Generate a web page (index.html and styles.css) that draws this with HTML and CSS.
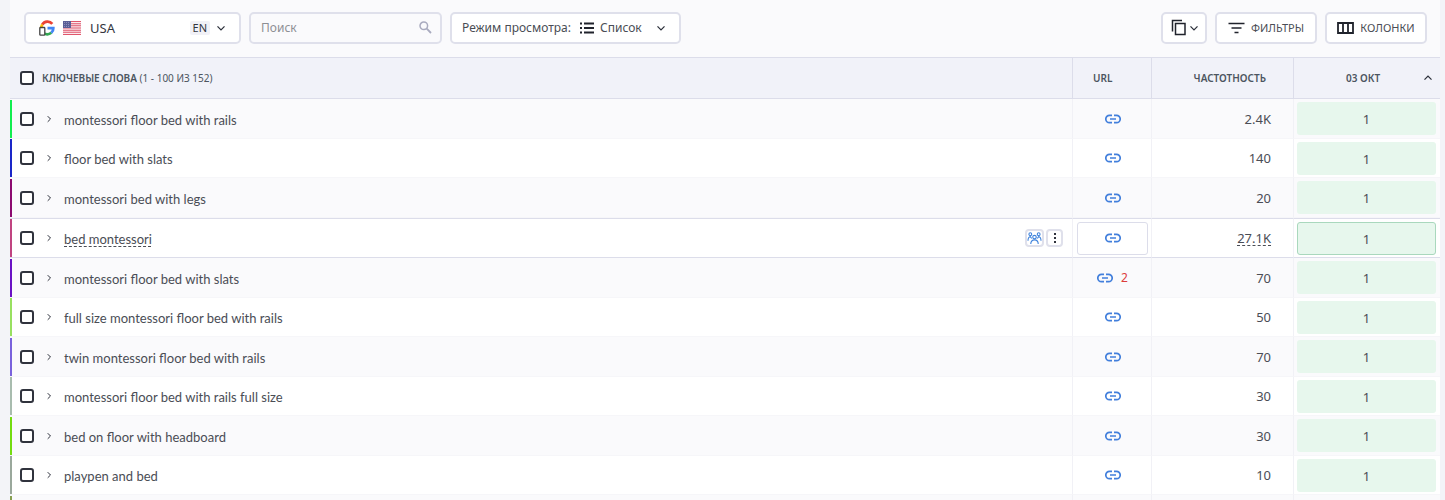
FILE: index.html
```html
<!DOCTYPE html>
<html lang="ru">
<head>
    <meta charset="UTF-8">
    <meta name="viewport" content="width=device-width, initial-scale=1.0">
    <title>Ключевые слова</title>
    <link rel="stylesheet" href="styles.css">
</head>
<body>

<svg class="sprite" aria-hidden="true">
    <symbol id="chevron" viewBox="0 0 8 8"><path d="M1.200 2.700L4 5.500l2.800-2.800" fill="none" stroke="currentColor" stroke-width="1"/></symbol>
    <symbol id="link" viewBox="0 0 16 10"><path d="M7 1.300H4.500a3.700 3.700 0 0 0 0 7.400H7M9 1.300h2.500a3.700 3.700 0 0 1 0 7.400H9M5 5h6" fill="none" stroke="currentColor" stroke-width="1.700"/></symbol>
    <symbol id="people" viewBox="0 0 16 14"><g fill="none" stroke="currentColor" stroke-width="1.200"><circle cx="8" cy="5.500" r="1.900"/><circle cx="3.500" cy="2.300" r="1.500"/><circle cx="12.500" cy="2.300" r="1.500"/><path d="M4 13c0-3 1.500-4.500 4-4.500s4 1.500 4 4.500M1 9.500c0-2.500 1-4.500 2.500-4.500L5 7M15 9.500c0-2.500-1-4.500-2.500-4.500L11 7"/></g></symbol>
</svg>

<main class="panel">
    <div class="toolbar">
        <button type="button" class="control region">
            <svg class="google" viewBox="0 0 16 16">
                <g fill="none" stroke-width="2.800">
                    <path d="M13.300 3.800A6.200 6.200 0 0 0 3.200 4.600" stroke="#ea4335"/>
                    <path d="M3.200 4.600A6.200 6.200 0 0 0 2.600 10" stroke="#fbbc05"/>
                    <path d="M4 12.500a6.200 6.200 0 0 0 8.300.3" stroke="#34a853"/>
                    <path d="M12.300 12.800C13.700 11.600 14.400 10 14.300 8.200H8.500" stroke="#4285f4"/>
                </g>
                <rect x=".8" y="7.500" width="5" height="7.700" rx=".8" fill="#fff" stroke="#444" stroke-width="1.300"/>
            </svg>
            <svg class="flag" viewBox="0 0 18 14">
                <path fill="#fbe9ec" d="M0 0h18v14H0z"/>
                <path stroke="#e0566c" stroke-width="1.100" d="M0 .5h18M0 2.700h18M0 4.800h18M0 7h18M0 9.200h18M0 11.300h18M0 13.500h18"/>
                <path fill="#5a5f97" d="M0 0h8v7H0z"/>
                <path stroke="#a3a6c8" stroke-dasharray="1 1" stroke-width=".7" d="M1 1.500h6M1 3.500h6M1 5.500h6"/>
            </svg>
            <span class="country">USA</span>
            <span class="lang">EN</span>
            <svg class="chevron"><use href="#chevron"/></svg>
        </button>

        <div class="control search">
            <input type="text" placeholder="Поиск" aria-label="Поиск">
            <svg class="search-icon" viewBox="0 0 13 13"><circle cx="4.800" cy="4.800" r="3.800" fill="none" stroke="currentColor" stroke-width="1.500"/><path d="M7.700 7.700L12 12" stroke="currentColor" stroke-width="1.800"/></svg>
        </div>

        <button type="button" class="control view">
            <span>Режим просмотра:</span>
            <svg class="list-icon" viewBox="0 0 14 12"><path d="M0 1.500h2M4 1.500h10M0 6h2M4 6h10M0 10.500h2M4 10.500h10" stroke="currentColor" stroke-width="1.800"/></svg>
            <span class="view-name">Список</span>
            <svg class="chevron"><use href="#chevron"/></svg>
        </button>

        <button type="button" class="control copy" aria-label="Копировать">
            <svg class="copy-icon" viewBox="0 0 16 17"><path d="M1.500 12.500V1.500h9.500M4.500 4.500h9.500v11H4.500z" fill="none" stroke="currentColor" stroke-width="1.500"/></svg>
            <svg class="chevron"><use href="#chevron"/></svg>
        </button>
        <button type="button" class="control action">
            <svg class="action-icon" viewBox="0 0 17 12"><path d="M.5 1.500h16M3.500 6h10M6.500 10.500h4" stroke="currentColor" stroke-width="1.700"/></svg>
            Фильтры
        </button>
        <button type="button" class="control action">
            <svg class="action-icon" viewBox="0 0 17 12"><path d="M1 1h15v10H1zM6 1v10M11 1v10" fill="none" stroke="currentColor" stroke-width="1.800"/></svg>
            Колонки
        </button>
    </div>

    <table class="keywords">
        <colgroup>
            <col>
            <col class="col-url">
            <col class="col-volume">
            <col class="col-date">
        </colgroup>
        <thead>
            <tr>
                <th>
                    <div class="cell">
                        <input type="checkbox" class="check" aria-label="Выбрать все">
                        <span class="title">Ключевые слова <span class="range">(1 - 100 из 152)</span></span>
                    </div>
                </th>
                <th class="head-url">URL</th>
                <th class="head-volume">Частотность</th>
                <th>
                    <div class="head-date">
                        <span>03 окт</span>
                        <svg class="chevron up"><use href="#chevron"/></svg>
                    </div>
                </th>
            </tr>
        </thead>
        <tbody id="rows"></tbody>
    </table>
</main>

<script>
    const keywords = [
        { name: 'montessori floor bed with rails', volume: '2.4K', color: '#12ee50' },
        { name: 'floor bed with slats', volume: '140', color: '#1a26c8' },
        { name: 'montessori bed with legs', volume: '20', color: '#8c0a70' },
        { name: 'bed montessori', volume: '27.1K', color: '#c04480', active: true },
        { name: 'montessori floor bed with slats', volume: '70', color: '#6a12c4', urls: 2 },
        { name: 'full size montessori floor bed with rails', volume: '50', color: '#98e060' },
        { name: 'twin montessori floor bed with rails', volume: '70', color: '#7a62dc' },
        { name: 'montessori floor bed with rails full size', volume: '30', color: '#a8bcae' },
        { name: 'bed on floor with headboard', volume: '30', color: '#74dc10' },
        { name: 'playpen and bed', volume: '10', color: '#9aa89c' },
        { name: '', volume: '', color: '#86a050' }
    ];

    const tools = `
        <div class="row-tools">
            <button type="button" class="tool" aria-label="Конкуренты"><svg class="people"><use href="#people"/></svg></button>
            <button type="button" class="tool dots" aria-label="Меню"><svg viewBox="0 0 4 12"><path d="M1 1h2v2H1zM1 5h2v2H1zM1 9h2v2H1z" fill="currentColor"/></svg></button>
        </div>`;

    document.getElementById('rows').innerHTML = keywords.map(k => `
        <tr class="${k.active ? 'active' : ''}">
            <td>
                <div class="cell">
                    <span class="bar" style="background-color: ${k.color}"></span>
                    ${k.name ? `<input type="checkbox" class="check" aria-label="${k.name}">
                    <button type="button" class="expand" aria-label="Развернуть"><svg class="chevron right"><use href="#chevron"/></svg></button>
                    <span class="name">${k.name}</span>` : ''}
                    ${k.active ? tools : ''}
                </div>
            </td>
            <td>${k.name ? `<div class="url"><a href="#" aria-label="URL"><svg class="link"><use href="#link"/></svg></a>${k.urls ? `<span class="count">${k.urls}</span>` : ''}</div>` : ''}</td>
            <td class="volume"><span>${k.volume}</span></td>
            <td>${k.name ? '<div class="position">1</div>' : ''}</td>
        </tr>`).join('');
</script>

</body>
</html>
```
FILE: styles.css
```css
* {
    box-sizing: border-box;
}

body {
    font-family: 'Noto Sans', sans-serif;
    font-size: 12px;
    color: #4a4d55;
    background-color: #f3f4f8;
    margin: 0;
}

button,
input {
    font: inherit;
    color: inherit;
    margin: 0;
}

button {
    cursor: pointer;
}

.sprite {
    display: none;
}

.panel {
    height: 100vh;
    margin: 0 5px 0 10px;
    overflow: hidden;
    background-color: #fafafc;
}

.toolbar {
    display: flex;
    align-items: center;
    gap: 8px;
    height: 57px;
    padding: 0 13px 2px 14px;
}

.control {
    display: flex;
    align-items: center;
    height: 32px;
    padding: 0 10px;
    background-color: #fff;
    border: 2px solid #dfe0eb;
    border-radius: 5px;
}

.chevron {
    flex: none;
    width: 10px;
    height: 10px;
    color: #2b2f3a;
}

.region {
    width: 217px;
    padding: 0 13px;
}

.google {
    width: 16px;
    height: 16px;
}

.flag {
    width: 18px;
    height: 14px;
    margin: 0 9px 0 8px;
}

.country {
    font-size: 13px;
    color: #33363e;
}

.lang {
    margin: 0 6px 0 auto;
    padding: 0 3px;
    font-size: 11px;
    line-height: 14px;
    color: #33363e;
    background-color: #f1f1f7;
    border-radius: 2px;
}

.search {
    width: 193px;
    padding: 0 8px 0 10px;
    background-color: #fafafc;
}

.search input {
    flex: 1;
    min-width: 0;
    padding: 0;
    border: none;
    outline: none;
    background: none;
}

.search input::placeholder {
    color: #8e8f94;
}

.search-icon {
    width: 13px;
    height: 13px;
    color: #a9abbf;
}

.view {
    width: 231px;
}

.list-icon {
    width: 14px;
    height: 12px;
    margin: 0 6px 0 9px;
    color: #20232c;
}

.view .chevron {
    margin-left: auto;
    margin-right: 3px;
}

.copy {
    width: 46px;
    margin-left: auto;
    padding: 0 6px 0 8px;
    justify-content: space-between;
}

.copy-icon {
    width: 16px;
    height: 17px;
    color: #20232c;
}

.action {
    width: 102px;
    padding: 0;
    justify-content: center;
    gap: 6px;
    font-size: 11px;
    text-transform: uppercase;
}

.action-icon {
    width: 17px;
    height: 12px;
    color: #20232c;
}

.keywords {
    width: 100%;
    table-layout: fixed;
    border-collapse: separate;
    border-spacing: 0;
}

.col-url {
    width: 79px;
}

.col-volume {
    width: 142px;
}

.col-date {
    width: 147px;
}

th {
    height: 42px;
    padding: 0;
    font-size: 10px;
    font-weight: 600;
    color: #4c5560;
    text-align: left;
    text-transform: uppercase;
    background-color: #f1f2f9;
    border-top: 1px solid #dcddea;
    border-bottom: 1px solid #dcddea;
}

th + th {
    border-left: 1px solid #dcddea;
}

.range {
    font-weight: 400;
}

.title {
    margin-left: 8px;
}

.head-url {
    padding-left: 20px;
}

.head-volume {
    padding-right: 27px;
    text-align: right;
}

.head-date {
    display: flex;
    align-items: center;
    padding: 0 7px 0 52px;
    justify-content: space-between;
}

.up {
    transform: rotate(180deg);
}

.right {
    transform: rotate(-90deg);
}

td {
    height: 40px;
    padding: 0;
    border-bottom: 1px solid #f6f6f9;
}

td + td {
    border-left: 1px solid #f1f1f6;
}

tr:nth-child(even) td {
    height: 39px;
    background-color: #fff;
}

.cell {
    display: flex;
    align-items: center;
    padding-left: 10px;
}

td .cell {
    height: 38px;
    padding-left: 0;
}

.bar {
    width: 2px;
    height: 38px;
    margin-right: 8px;
}

.check {
    appearance: none;
    flex: none;
    width: 14px;
    height: 14px;
    background-color: #fff;
    border: 2px solid #30333d;
    border-radius: 3px;
}

.expand {
    display: flex;
    margin: 0 11px;
    padding: 0;
    border: none;
    background: none;
}

.expand .chevron {
    width: 8px;
    height: 8px;
}

.name {
    font-family: Lato, sans-serif;
    font-size: 13px;
    padding-top: 2px;
    line-height: 16px;
}

.row-tools {
    display: flex;
    gap: 2px;
    margin-left: auto;
    margin-right: 9px;
}

.tool {
    display: flex;
    align-items: center;
    justify-content: center;
    width: 19px;
    height: 18px;
    padding: 0;
    background-color: #fff;
    border: 2px solid #dfe0eb;
    border-radius: 4px;
    color: #3f83dc;
}

.dots {
    width: 17px;
    color: #30333d;
}

.dots svg {
    width: 4px;
    height: 12px;
}

.people {
    flex: none;
    width: 15px;
    height: 13px;
}

.url {
    display: flex;
    align-items: center;
    justify-content: center;
    gap: 8px;
    height: 33px;
    margin: 0 3px 0 4px;
    border: 1px solid transparent;
    border-radius: 3px;
}

.url a {
    display: flex;
    color: #427fdc;
}

.link {
    width: 16px;
    height: 10px;
}

.count {
    color: #dc3c3c;
}

.volume {
    padding-right: 22px;
    font-size: 13px;
    text-align: right;
}

.position {
    height: 33px;
    margin: 0 4px 0 3px;
    font-size: 13px;
    line-height: 32px;
    text-align: center;
    background-color: #e7f7ed;
    border: 1px solid transparent;
    border-radius: 3px;
}

.active td {
    border-top: 1px solid #dcddea;
    border-bottom-color: #dcddea;
}

.active .name,
.active .volume span {
    text-decoration: underline dashed 1px;
    text-underline-offset: 2px;
}

.active .url {
    border-color: #dcddea;
}

.active .position {
    border-color: #a9d8bd;
}
```
